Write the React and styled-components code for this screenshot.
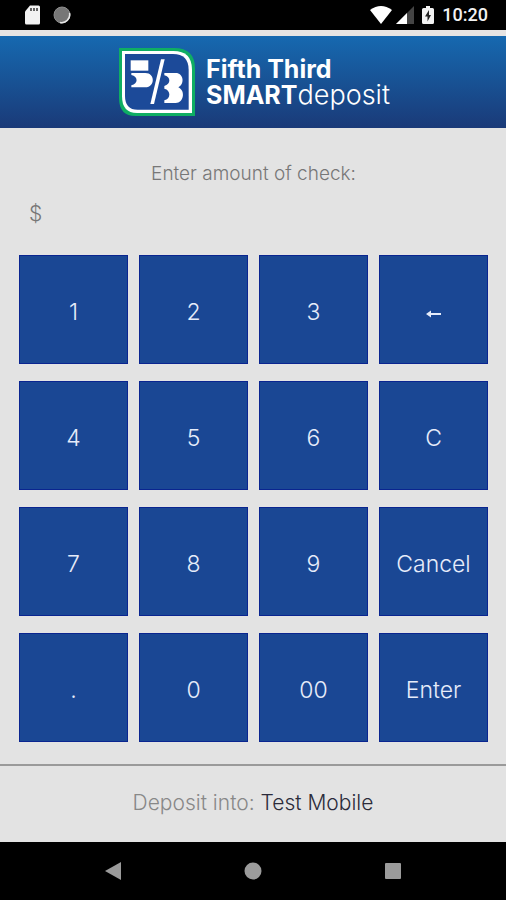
import React, { useState } from "react";
import styled, { createGlobalStyle } from "styled-components";

const GlobalStyle = createGlobalStyle`
  * {
    box-sizing: border-box;
  }

  body {
    margin: 0;
    background: #000;
    font-family: Inter, Roboto, sans-serif;
  }
`;

const Screen = styled.div`
  min-height: 100vh;
  display: flex;
  flex-direction: column;
  background: #e3e3e3;
`;

const StatusBar = styled.div`
  height: 30px;
  padding: 0 18px 0 24px;
  display: flex;
  align-items: center;
  justify-content: space-between;
  background: #000;
`;

const StatusGroup = styled.div`
  display: flex;
  align-items: center;
  gap: ${(props) => props.$gap}px;
`;

const Clock = styled.span`
  color: #f2f2f2;
  font-family: Roboto, sans-serif;
  font-size: 18px;
  font-weight: 500;
  line-height: 20px;
`;

const Header = styled.header`
  height: 98px;
  padding-left: 3px;
  display: flex;
  align-items: center;
  justify-content: center;
  gap: 11px;
  border-top: 6px solid #e6e4e3;
  background: linear-gradient(#1669b0, #1a3a78);
`;

const Brand = styled.h1`
  display: flex;
  flex-direction: column;
  margin: 0;
  color: #fff;
  font-size: 25px;
  font-weight: 700;
  line-height: 25px;
`;

const BrandLine = styled.span`
  display: flex;
  align-items: baseline;
`;

const Thin = styled.span`
  font-size: 27px;
  font-weight: 300;
`;

const Main = styled.main`
  flex: 1;
  padding: 32px 18px 21px 19px;
`;

const Prompt = styled.label`
  display: block;
  color: #777;
  font-size: 19px;
  font-weight: 300;
  line-height: 28px;
  text-align: center;
`;

const AmountRow = styled.div`
  display: flex;
  align-items: center;
  gap: 6px;
  padding: 12px 10px 27px;
  color: #777;
  font-size: 21px;
  font-weight: 300;
  line-height: 28px;
`;

const AmountInput = styled.input`
  flex: 1;
  min-width: 0;
  height: 28px;
  padding: 0;
  border: none;
  outline: none;
  background: transparent;
  color: inherit;
  font: inherit;
`;

const Keypad = styled.div`
  display: grid;
  grid-template-columns: repeat(4, 1fr);
  gap: 17px 11px;
`;

const Key = styled.button`
  display: flex;
  align-items: center;
  justify-content: center;
  aspect-ratio: 1;
  min-width: 0;
  padding: 5px 0 0;
  border: 1px solid #0a2590;
  background: #1a4794;
  color: #e6ecfa;
  font-family: inherit;
  font-size: 23px;
  font-weight: 300;
  line-height: 28px;
  cursor: pointer;
`;

const Footer = styled.footer`
  padding: 23px 18px 25px;
  border-top: 2px solid #9a9a9a;
  color: #888;
  font-size: 21px;
  font-weight: 300;
  line-height: 28px;
  text-align: center;
`;

const Account = styled.span`
  color: #2b2b3a;
`;

const NavBar = styled.nav`
  height: 58px;
  padding: 0 43px;
  display: grid;
  grid-template-columns: repeat(3, 1fr);
  background: #000;
`;

const NavButton = styled.button`
  display: flex;
  align-items: center;
  justify-content: center;
  padding: 0;
  border: none;
  background: transparent;
  color: #9b9b9b;
  cursor: pointer;
`;

const SdCard = () => (
  <svg width="17" height="20" viewBox="0 0 17 20">
    <path d="M6 0.5h8.500a1.500 1.500 0 0 1 1.500 1.500v16a1.500 1.500 0 0 1-1.500 1.500h-12a1.500 1.500 0 0 1-1.500-1.500v-11.500z" fill="#f2f2f2" />
    <path d="M7 3v3M10 3v3M13 3v3" stroke="#333" strokeWidth="1.500" />
  </svg>
);

const Record = () => (
  <svg width="18" height="18" viewBox="0 0 18 18">
    <circle cx="9" cy="9" r="8" fill="#777" stroke="#8d8d8d" />
    <path d="M16.500 7a8 8 0 0 1-9.500 9.500" fill="none" stroke="#e8e8e8" strokeWidth="1.500" />
  </svg>
);

const Wifi = () => (
  <svg width="22" height="18" viewBox="0 0 22 18">
    <path d="M0 4Q11-4 22 4L11 18z" fill="#fff" />
  </svg>
);

const Signal = () => (
  <svg width="18" height="18" viewBox="0 0 18 18">
    <path d="M18 0v18H0z" fill="#444" />
    <path d="M11 7v11H0z" fill="#fff" />
  </svg>
);

const Battery = () => (
  <svg width="12" height="18" viewBox="0 0 12 18">
    <path d="M4 0h4v2h2.500q1.500 0 1.500 1.500v13q0 1.500-1.500 1.500h-9q-1.500 0-1.500-1.500v-13q0-1.500 1.500-1.500h2.500z" fill="#f2f2f2" />
    <path d="M7 4L3 10.500h2.500v5L9 9H7z" fill="#222" />
  </svg>
);

const BankLogo = () => (
  <svg width="76" height="68" viewBox="0 0 228 204" role="img" aria-label="Fifth Third Bank">
    <path d="M0 0h166q62 0 62 62v142H50q-50 0-50-54z" fill="#0fae63" />
    <path d="M9 9h154q56 0 56 56v130H54q-45 0-45-50z" fill="#fff" />
    <path d="M18 18h144q47 0 47 48v119H56q-38 0-38-42z" fill="#1c4a99" />
    <path d="M35 37h53v31H35z" fill="#fff" />
    <path d="M37 75h42c30 0 30 43 0 43H37v-6c21-5 21-26 0-31z" fill="#fff" />
    <path d="M126 34h11L105 168H94z" fill="#fff" />
    <path d="M136 75h34c24 0 28 33 8 43c22 10 17 47-8 47h-34v-8c20-4 20-31 0-35v-8c20-5 20-28 0-32z" fill="#fff" />
  </svg>
);

const BackArrow = () => (
  <svg width="16" height="12" viewBox="0 0 16 12">
    <path d="M0 8l5-3.500v2.500h10v2H5v2.500z" fill="#e6ecfa" />
  </svg>
);

const keys = ["1", "2", "3", "back", "4", "5", "6", "C", "7", "8", "9", "Cancel", ".", "0", "00", "Enter"];

const App = () => {
  const [amount, setAmount] = useState("");

  const press = (key) => {
    if (key === "back") {
      setAmount(amount.slice(0, -1));
    } else if (key === "C" || key === "Cancel") {
      setAmount("");
    } else if (key !== "Enter") {
      setAmount(amount + key);
    }
  };

  return (
    <Screen>
      <GlobalStyle />
      <StatusBar>
        <StatusGroup $gap={12}>
          <SdCard />
          <Record />
        </StatusGroup>
        <StatusGroup $gap={8}>
          <StatusGroup $gap={4}>
            <Wifi />
            <Signal />
          </StatusGroup>
          <Battery />
          <Clock>10:20</Clock>
        </StatusGroup>
      </StatusBar>
      <Header>
        <BankLogo />
        <Brand>
          <BrandLine>Fifth Third</BrandLine>
          <BrandLine>
            SMART<Thin>deposit</Thin>
          </BrandLine>
        </Brand>
      </Header>
      <Main>
        <Prompt htmlFor="amount">Enter amount of check:</Prompt>
        <AmountRow>
          <span>$</span>
          <AmountInput
            id="amount"
            inputMode="decimal"
            value={amount}
            onChange={(e) => setAmount(e.target.value)}
          />
        </AmountRow>
        <Keypad>
          {keys.map((key) => (
            <Key key={key} type="button" aria-label={key === "back" ? "Backspace" : undefined} onClick={() => press(key)}>
              {key === "back" ? <BackArrow /> : key}
            </Key>
          ))}
        </Keypad>
      </Main>
      <Footer>
        Deposit into: <Account>Test Mobile</Account>
      </Footer>
      <NavBar>
        <NavButton type="button" aria-label="Back">
          <svg width="16" height="18" viewBox="0 0 16 18">
            <path d="M16 0v18L0 9z" fill="currentColor" />
          </svg>
        </NavButton>
        <NavButton type="button" aria-label="Home">
          <svg width="18" height="18" viewBox="0 0 18 18">
            <circle cx="9" cy="9" r="8.500" fill="currentColor" />
          </svg>
        </NavButton>
        <NavButton type="button" aria-label="Recent apps">
          <svg width="16" height="16" viewBox="0 0 16 16">
            <rect width="16" height="16" rx="1" fill="currentColor" />
          </svg>
        </NavButton>
      </NavBar>
    </Screen>
  );
};

export default App;
